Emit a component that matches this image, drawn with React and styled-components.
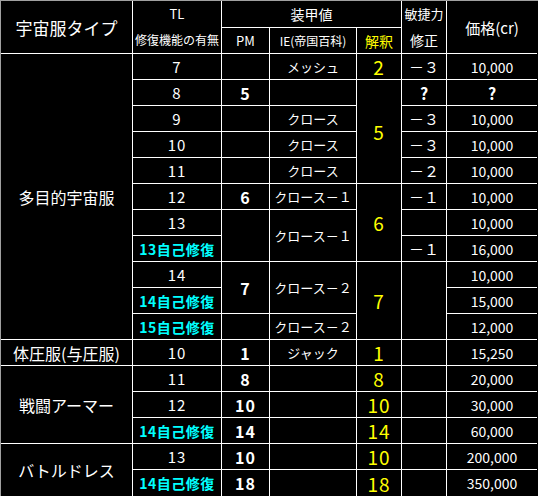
import React from "react";
import styled, { createGlobalStyle, css } from "styled-components";

const Global = createGlobalStyle`
  html, body { margin: 0; padding: 0; background: #000; }
  body { font-family: "Noto Sans CJK JP", "Noto Sans", sans-serif; }
`;

const Frame = styled.div`
  width: 538px;
  height: 496px;
  box-sizing: border-box;
  border-top: 1px solid #a0a0a0;
  border-left: 1px solid #a0a0a0;
  background: #000;
  overflow: hidden;
`;

const Grid = styled.div`
  display: grid;
  grid-template-columns: 132px 89px 48px 87px 45px 45px 90px;
  grid-template-rows: 27px 26px repeat(17, 26px);
`;

const Cell = styled.div`
  box-sizing: border-box;
  border-right: 1px solid #fff;
  border-bottom: 1px solid #fff;
  display: flex;
  align-items: center;
  justify-content: center;
  color: #fff;
  font-size: 13px;
  line-height: 1;
  white-space: nowrap;
  overflow: hidden;
  ${(p) => p.$rs && css`grid-row: span ${p.$rs};`}
  ${(p) => p.$cs && css`grid-column: span ${p.$cs};`}
  ${(p) => p.$last && css`border-right: none;`}
  ${(p) => p.$bottom && css`border-bottom: none;`}
`;

const HeadCell = styled(Cell)`
  font-size: ${(p) => p.$size || 13}px;
  color: ${(p) => (p.$yellow ? "#ffff00" : "#fff")};
`;

const StackCell = styled(Cell)`
  flex-direction: column;
  justify-content: flex-start;
`;

const StackLine = styled.span`
  display: block;
  height: ${(p) => p.$h}px;
  line-height: ${(p) => p.$h}px;
  font-size: ${(p) => p.$size}px;
`;

const TypeCell = styled(Cell)`
  font-size: 16px;
`;

const TLCell = styled(Cell)`
  font-size: 15px;
  letter-spacing: 1px;
`;

const RepairCell = styled(Cell)`
  color: #00ffff;
  font-weight: 700;
  font-size: 14px;
  letter-spacing: 0.5px;
`;

const PMCell = styled(Cell)`
  font-size: 16px;
  font-weight: 700;
  letter-spacing: 1px;
`;

const IECell = styled(Cell)`
  font-size: 13px;
`;

const ArmorCell = styled(Cell)`
  color: #ffff00;
  font-size: 19px;
  letter-spacing: 1px;
`;

const AgilityCell = styled(Cell)`
  font-size: ${(p) => (p.$bold ? 16 : 15)}px;
  font-weight: ${(p) => (p.$bold ? 700 : 400)};
`;

const PriceCell = styled(Cell)`
  font-size: ${(p) => (p.$bold ? 16 : 14)}px;
  font-weight: ${(p) => (p.$bold ? 700 : 400)};
`;

export default function App() {
  return (
    <>
      <Global />
      <Frame>
        <Grid>
          {/* header */}
          <HeadCell $rs={2} $size={17}>宇宙服タイプ</HeadCell>
          <StackCell $rs={2}>
            <StackLine $h={26} $size={13}>TL</StackLine>
            <StackLine $h={26} $size={12}>修復機能の有無</StackLine>
          </StackCell>
          <HeadCell $cs={3} $size={14}>装甲値</HeadCell>
          <StackCell $rs={2}>
            <StackLine $h={26} $size={13}>敏捷力</StackLine>
            <StackLine $h={26} $size={14}>修正</StackLine>
          </StackCell>
          <HeadCell $rs={2} $last $size={15}>価格(cr)</HeadCell>
          <HeadCell $size={13}>PM</HeadCell>
          <HeadCell $size={12}>IE(帝国百科)</HeadCell>
          <HeadCell $size={14} $yellow>解釈</HeadCell>

          {/* r1 */}
          <TypeCell $rs={11}>多目的宇宙服</TypeCell>
          <TLCell>7</TLCell>
          <PMCell />
          <IECell>メッシュ</IECell>
          <ArmorCell>2</ArmorCell>
          <AgilityCell>－３</AgilityCell>
          <PriceCell $last>10,000</PriceCell>

          {/* r2 */}
          <TLCell>8</TLCell>
          <PMCell>5</PMCell>
          <IECell />
          <ArmorCell $rs={4}>5</ArmorCell>
          <AgilityCell $bold>?</AgilityCell>
          <PriceCell $last $bold>?</PriceCell>

          {/* r3 */}
          <TLCell>9</TLCell>
          <PMCell />
          <IECell>クロース</IECell>
          <AgilityCell>－３</AgilityCell>
          <PriceCell $last>10,000</PriceCell>

          {/* r4 */}
          <TLCell>10</TLCell>
          <PMCell />
          <IECell>クロース</IECell>
          <AgilityCell>－３</AgilityCell>
          <PriceCell $last>10,000</PriceCell>

          {/* r5 */}
          <TLCell>11</TLCell>
          <PMCell />
          <IECell>クロース</IECell>
          <AgilityCell>－２</AgilityCell>
          <PriceCell $last>10,000</PriceCell>

          {/* r6 */}
          <TLCell>12</TLCell>
          <PMCell>6</PMCell>
          <IECell>クロース－１</IECell>
          <ArmorCell $rs={3}>6</ArmorCell>
          <AgilityCell>－１</AgilityCell>
          <PriceCell $last>10,000</PriceCell>

          {/* r7 */}
          <TLCell>13</TLCell>
          <PMCell $rs={2} />
          <IECell $rs={2}>クロース－１</IECell>
          <AgilityCell />
          <PriceCell $last>10,000</PriceCell>

          {/* r8 */}
          <RepairCell>13自己修復</RepairCell>
          <AgilityCell>－１</AgilityCell>
          <PriceCell $last>16,000</PriceCell>

          {/* r9 */}
          <TLCell>14</TLCell>
          <PMCell $rs={2}>7</PMCell>
          <IECell $rs={2}>クロース－２</IECell>
          <ArmorCell $rs={3}>7</ArmorCell>
          <AgilityCell $rs={3} />
          <PriceCell $last>10,000</PriceCell>

          {/* r10 */}
          <RepairCell>14自己修復</RepairCell>
          <PriceCell $last>15,000</PriceCell>

          {/* r11 */}
          <RepairCell>15自己修復</RepairCell>
          <PMCell />
          <IECell>クロース－２</IECell>
          <PriceCell $last>12,000</PriceCell>

          {/* r12 */}
          <TypeCell>体圧服(与圧服)</TypeCell>
          <TLCell>10</TLCell>
          <PMCell>1</PMCell>
          <IECell>ジャック</IECell>
          <ArmorCell>1</ArmorCell>
          <AgilityCell />
          <PriceCell $last>15,250</PriceCell>

          {/* r13 */}
          <TypeCell $rs={3}>戦闘アーマー</TypeCell>
          <TLCell>11</TLCell>
          <PMCell>8</PMCell>
          <IECell />
          <ArmorCell>8</ArmorCell>
          <AgilityCell />
          <PriceCell $last>20,000</PriceCell>

          {/* r14 */}
          <TLCell>12</TLCell>
          <PMCell>10</PMCell>
          <IECell />
          <ArmorCell>10</ArmorCell>
          <AgilityCell />
          <PriceCell $last>30,000</PriceCell>

          {/* r15 */}
          <RepairCell>14自己修復</RepairCell>
          <PMCell>14</PMCell>
          <IECell />
          <ArmorCell>14</ArmorCell>
          <AgilityCell />
          <PriceCell $last>60,000</PriceCell>

          {/* r16 */}
          <TypeCell $rs={2} $bottom>バトルドレス</TypeCell>
          <TLCell>13</TLCell>
          <PMCell>10</PMCell>
          <IECell />
          <ArmorCell>10</ArmorCell>
          <AgilityCell />
          <PriceCell $last>200,000</PriceCell>

          {/* r17 */}
          <RepairCell $bottom>14自己修復</RepairCell>
          <PMCell $bottom>18</PMCell>
          <IECell $bottom />
          <ArmorCell $bottom>18</ArmorCell>
          <AgilityCell $bottom />
          <PriceCell $last $bottom>350,000</PriceCell>
        </Grid>
      </Frame>
    </>
  );
}
